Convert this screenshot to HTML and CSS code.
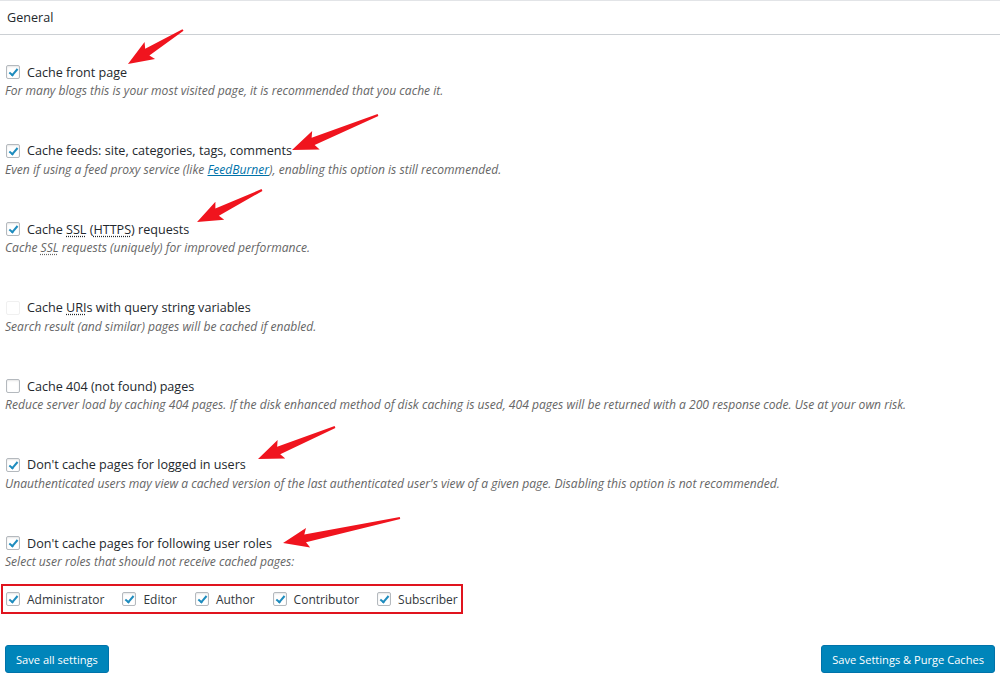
FILE: index.html
```html
<!DOCTYPE html>
<html lang="en">
<head>
    <meta charset="UTF-8">
    <title>Page Cache - General</title>
    <link rel="stylesheet" href="styles.css">
</head>
<body>

<div class="panel">
    <h3 class="panel-title">General</h3>

    <div class="options">
        <div class="option">
            <label class="option-label"><span class="box checked"></span><span>Cache front page</span></label>
            <p class="description">For many blogs this is your most visited page, it is recommended that you cache it.</p>
        </div>
        <div class="option">
            <label class="option-label"><span class="box checked"></span><span>Cache feeds: site, categories, tags, comments</span></label>
            <p class="description">Even if using a feed proxy service (like <a href="#">FeedBurner</a>), enabling this option is still recommended.</p>
        </div>
        <div class="option">
            <label class="option-label"><span class="box checked"></span><span>Cache <abbr>SSL</abbr> (<abbr>HTTPS</abbr>) requests</span></label>
            <p class="description">Cache <abbr>SSL</abbr> requests (uniquely) for improved performance.</p>
        </div>
        <div class="option">
            <label class="option-label"><span class="box disabled"></span><span>Cache <abbr>URI</abbr>s with query string variables</span></label>
            <p class="description">Search result (and similar) pages will be cached if enabled.</p>
        </div>
        <div class="option">
            <label class="option-label"><span class="box"></span><span>Cache 404 (not found) pages</span></label>
            <p class="description">Reduce server load by caching 404 pages. If the disk enhanced method of disk caching is used, 404 pages will be returned with a 200 response code. Use at your own risk.</p>
        </div>
        <div class="option">
            <label class="option-label"><span class="box checked"></span><span>Don't cache pages for logged in users</span></label>
            <p class="description">Unauthenticated users may view a cached version of the last authenticated user's view of a given page. Disabling this option is not recommended.</p>
        </div>
        <div class="option">
            <label class="option-label"><span class="box checked"></span><span>Don't cache pages for following user roles</span></label>
            <p class="description">Select user roles that should not receive cached pages:</p>
        </div>
    </div>

    <div class="roles">
        <label class="role"><span class="box checked"></span>Administrator</label>
        <label class="role"><span class="box checked"></span>Editor</label>
        <label class="role"><span class="box checked"></span>Author</label>
        <label class="role"><span class="box checked"></span>Contributor</label>
        <label class="role"><span class="box checked"></span>Subscriber</label>
    </div>

    <div class="actions">
        <button class="button">Save all settings</button>
        <button class="button">Save Settings &amp; Purge Caches</button>
    </div>
</div>

<!-- red annotation arrows laid over the screenshot -->
<svg class="arrows" width="1000" height="696" viewBox="0 0 1000 696">
    <g transform="translate(183 30) rotate(148.3)">
        <polygon points="0,-1 42,-4 39,-10 64.7,0 39,10 42,4 0,1"/>
    </g>
    <g transform="translate(378 115) rotate(157.9)">
        <polygon points="0,-1 70,-4 67,-10 92.8,0 67,10 70,4 0,1"/>
    </g>
    <g transform="translate(262 190) rotate(153.8)">
        <polygon points="0,-1 50,-4 47,-10 72.4,0 47,10 50,4 0,1"/>
    </g>
    <g transform="translate(335 427) rotate(157.4)">
        <polygon points="0,-1 61,-4 58,-10 83.4,0 58,10 61,4 0,1"/>
    </g>
    <g transform="translate(400 518) rotate(167.9)">
        <polygon points="0,-1 97,-4 94,-10 119.6,0 94,10 97,4 0,1"/>
    </g>
</svg>

</body>
</html>
```

FILE: styles.css
```css
body {
    margin: 0;
    background: #fff;
    font-family: "Open Sans", "Noto Sans", sans-serif;
    font-size: 12.6px;
    color: #23282d;
}

.panel {
    position: relative;
    border-top: 1px solid #e2e4e7;
    min-height: 695px;
}

.panel-title {
    margin: 0;
    height: 33px;
    line-height: 33px;
    padding-left: 7px;
    font-size: 12.6px;
    font-weight: normal;
    color: #23282d;
    border-bottom: 1px solid #ccd0d4;
}

.options {
    display: flex;
    flex-direction: column;
    gap: 40.5px;
    padding: 27px 0 0 6px;
}

.option-label {
    display: flex;
    align-items: center;
    height: 20px;
    gap: 7px;
}

.description {
    margin: 0 0 0 -1px;
    height: 18px;
    line-height: 18px;
    font-size: 12.1px;
    font-style: italic;
    color: #666;
}

.description a {
    color: #0073aa;
}

abbr {
    text-decoration: underline dotted;
    text-underline-offset: 2px;
}

.box {
    width: 14px;
    height: 14px;
    box-sizing: border-box;
    border: 1px solid #b4b9be;
    border-radius: 2px;
    background: #fff;
    box-shadow: inset 0 1px 2px rgba(0, 0, 0, 0.1);
    position: relative;
    flex: none;
}

.box.checked::after {
    content: "";
    position: absolute;
    left: 4px;
    top: 1px;
    width: 3px;
    height: 7px;
    border: solid #1e8cbe;
    border-width: 0 2px 2px 0;
    transform: rotate(40deg);
}

.box.disabled {
    border-color: #f0f0f0;
    box-shadow: none;
}

.roles {
    display: flex;
    align-items: center;
    gap: 18px;
    margin: 13px 0 0 1px;
    width: 455px;
    height: 26px;
    padding-left: 3px;
    border: 2px solid #e0141e;
    font-size: 12px;
    color: #32373c;
}

.role {
    display: flex;
    align-items: center;
    gap: 7px;
}

.actions {
    display: flex;
    justify-content: space-between;
    padding: 31px 5px 0 5px;
}

.button {
    height: 28px;
    padding: 0 10px;
    font-family: inherit;
    font-size: 11.1px;
    color: #fff;
    background: #0085ba;
    border: 1px solid #0073aa;
    border-radius: 3px;
    cursor: pointer;
}

.arrows {
    position: absolute;
    left: 0;
    top: 0;
    pointer-events: none;
}

.arrows polygon {
    fill: #f0141e;
}
```
